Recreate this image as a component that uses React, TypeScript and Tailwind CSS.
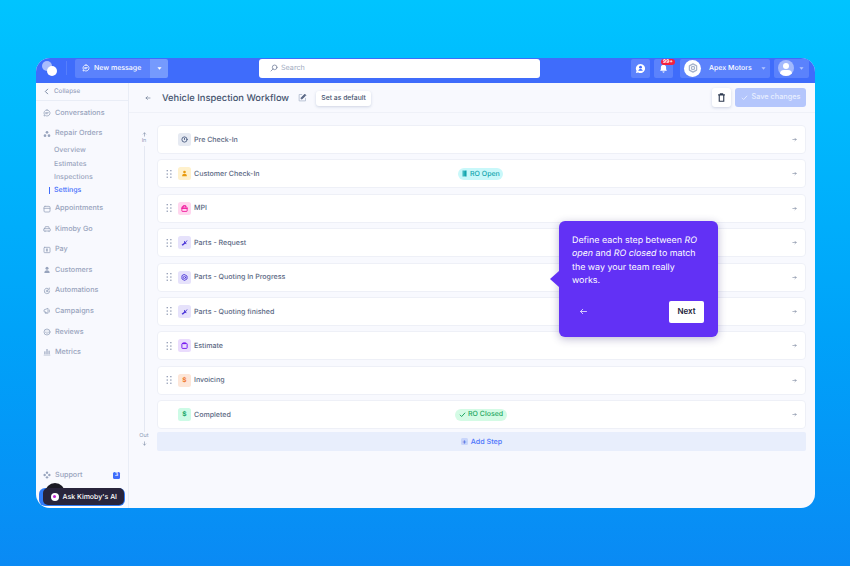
import React from "react";

type P = { className?: string };
const S = ({ className, children, fill }: P & { children: React.ReactNode; fill?: boolean }) => (
  <svg viewBox="0 0 24 24" className={className} fill={fill ? "currentColor" : "none"} stroke={fill ? "none" : "currentColor"} strokeWidth={2.4} strokeLinecap="round" strokeLinejoin="round">{children}</svg>
);
const Chat = (p: P) => <S {...p}><path d="M12 3a9 9 0 1 1-4.5 16.8L3 21l1.2-4.5A9 9 0 0 1 12 3z" /><path d="M8 11h8M8 14h5" /></S>;
const Orders = (p: P) => <S {...p} fill><circle cx="12" cy="7" r="4" /><circle cx="6" cy="17" r="4" /><circle cx="18" cy="17" r="4" /></S>;
const Calendar = (p: P) => <S {...p}><rect x="3" y="4" width="18" height="17" rx="3" /><path d="M3 10h18" /></S>;
const Car = (p: P) => <S {...p}><path d="M5 11l2-6h10l2 6" /><rect x="2" y="11" width="20" height="7" rx="2" /><path d="M6 18v2M18 18v2" /></S>;
const Pay = (p: P) => <S {...p}><rect x="3" y="4" width="18" height="16" rx="2" /><path d="M12 8v8M10 10h3M10 14h3" /></S>;
const Person = (p: P) => <S {...p} fill><circle cx="12" cy="7" r="4.5" /><path d="M4 21c0-5 3-8 8-8s8 3 8 8z" /></S>;
const Auto = (p: P) => <S {...p}><path d="M20 12a8 8 0 1 1-5-7.4" /><circle cx="12" cy="12" r="2.5" /><path d="M19 3v4h-4" /></S>;
const Mega = (p: P) => <S {...p}><path d="M3 10v4l12 5V5z" /><path d="M7 15v4h3M19 9v6" /></S>;
const Smile = (p: P) => <S {...p}><circle cx="12" cy="12" r="9" /><path d="M8 14c2 2 6 2 8 0M9 9h.01M15 9h.01" /></S>;
const Bars = (p: P) => <S {...p} fill><rect x="4" y="10" width="3.4" height="9" /><rect x="10.3" y="3" width="3.4" height="16" /><rect x="16.6" y="8" width="3.4" height="11" /><rect x="2" y="20.5" width="20" height="1.5" /></S>;
const Support = (p: P) => <S {...p} fill><circle cx="12" cy="5" r="3.6" /><circle cx="12" cy="19" r="3.6" /><circle cx="5" cy="12" r="3.6" /><circle cx="19" cy="12" r="3.6" /></S>;
const ArrowR = (p: P) => <S {...p}><path d="M4 12h16M14 6l6 6-6 6" /></S>;
const ArrowL = (p: P) => <S {...p}><path d="M20 12H4M10 6l-6 6 6 6" /></S>;
const ArrowU = (p: P) => <S {...p}><path d="M12 20V4M6 10l6-6 6 6" /></S>;
const ArrowD = (p: P) => <S {...p}><path d="M12 4v16M6 14l6 6 6-6" /></S>;
const Caret = (p: P) => <S {...p} fill><path d="M5 8h14l-7 8z" /></S>;
const Grip = () => (
  <svg viewBox="0 0 6 8" className="w-[6px] h-[8px] text-[#8f9ab3]" fill="currentColor">
    {[0.6, 4, 7.2].flatMap((y) => [0.6, 4.2].map((x) => <rect key={`${x}-${y}`} x={x} y={y - 0.6} width="1.3" height="1.3" />))}
  </svg>
);
const Clock = (p: P) => <S {...p}><circle cx="12" cy="12" r="9" strokeWidth={3} /><path d="M12 12V8" strokeWidth={3} /></S>;
const Bag = (p: P) => <S {...p}><rect x="3" y="7" width="18" height="15" rx="1.5" strokeWidth={3} /><path d="M8 7V2h8v5M3 12h18" strokeWidth={3} /></S>;
const Wrench = (p: P) => <S {...p} fill><path d="M2 20l9-7-1-5 3-1 1 4 8-8 0 2-6 9 3 1-1 3-4-2-8 7z" /></S>;
const Gear = (p: P) => <S {...p}><path d="M12 2l8.7 5v10L12 22l-8.7-5V7z" strokeWidth={3} /><circle cx="12" cy="12" r="3.8" strokeWidth={3} /></S>;
const Clip = (p: P) => <S {...p}><rect x="3" y="5" width="18" height="17" rx="2" strokeWidth={3.4} /><path d="M8 2h8v5H8z" fill="currentColor" strokeWidth={1} /></S>;
const Dollar = ({ className }: P) => <span className={`${className} flex items-center justify-center text-[6.5px] leading-none font-bold`}>$</span>;

const nav: [string, (p: P) => React.ReactElement][] = [
  ["Appointments", Calendar], ["Kimoby Go", Car], ["Pay", Pay], ["Customers", Person],
  ["Automations", Auto], ["Campaigns", Mega], ["Reviews", Smile], ["Metrics", Bars],
];

const steps = [
  { name: "Pre Check-In", Icon: Clock, bg: "bg-[#e6eaf2]", fg: "text-[#47597e]", grip: false },
  { name: "Customer Check-In", Icon: Person, bg: "bg-[#fff1cc]", fg: "text-[#e89a0c]", grip: true, badge: "open" },
  { name: "MPI", Icon: Bag, bg: "bg-[#ffd6ee]", fg: "text-[#f0149c]", grip: true },
  { name: "Parts - Request", Icon: Wrench, bg: "bg-[#e6e2fb]", fg: "text-[#4a35d8]", grip: true },
  { name: "Parts - Quoting In Progress", Icon: Gear, bg: "bg-[#e6e2fb]", fg: "text-[#4a35d8]", grip: true },
  { name: "Parts - Quoting finished", Icon: Wrench, bg: "bg-[#e6e2fb]", fg: "text-[#4a35d8]", grip: true },
  { name: "Estimate", Icon: Clip, bg: "bg-[#eadcfd]", fg: "text-[#7a1ff0]", grip: true },
  { name: "Invoicing", Icon: Dollar, bg: "bg-[#fde6d8]", fg: "text-[#f0782c]", grip: true },
  { name: "Completed", Icon: Dollar, bg: "bg-[#cdfbe6]", fg: "text-[#16a866]", grip: false, badge: "closed" },
];

export default function App() {
  return (
    <div className="w-[850px] h-[566px] overflow-hidden bg-gradient-to-b from-[#00c4ff] to-[#0a8af4] pt-[58px] pl-[36px] [text-rendering:geometricPrecision]" style={{ fontFamily: "Inter, 'Liberation Sans', sans-serif" }}>
      <div className="relative w-[779px] h-[450px] rounded-[14px] bg-[#f8f9fe] flex flex-col overflow-hidden">
        {/* top bar */}
        <header className="h-[25px] shrink-0 bg-[#3f6cfb] flex items-center pb-[5px] text-white">
          <div className="relative w-[18px] h-[18px] ml-[5px]">
            <div className="absolute left-[1px] top-[2px] w-[10px] h-[10px] rounded-full bg-[#a9bcfd]" />
            <div className="absolute left-[6px] top-[7px] w-[10px] h-[10px] rounded-full bg-white" />
          </div>
          <div className="w-px h-[14px] bg-[#567efb] ml-[7px]" />
          <div className="ml-[8px] h-[19px] w-[75px] rounded-l-[2px] bg-[#5b82fc] flex items-center pl-[7px] gap-[4px] text-[7px] font-medium">
            <Chat className="w-[8px] h-[8px]" /> New message
          </div>
          <div className="h-[19px] w-[18px] rounded-r-[2px] bg-[#759afd] flex items-center justify-center"><Caret className="w-[7px] h-[7px]" /></div>
          <div className="ml-[91px] h-[19px] w-[281px] rounded-[3px] bg-white flex items-center pl-[11px] gap-[3px] text-[7.2px] text-[#a1abc0]">
            <svg viewBox="0 0 24 24" className="w-[8px] h-[8px] text-[#76839e]" fill="none" stroke="currentColor" strokeWidth="2.4" strokeLinecap="round"><circle cx="14" cy="10" r="7" /><path d="M9 15l-6 6" /></svg>
            <span className="pt-[1px]">Search</span>
          </div>
          <div className="ml-[91px] w-[19px] h-[19px] rounded-[2px] bg-[#5b82fc] flex items-center justify-center">
            <svg viewBox="0 0 24 24" className="w-[11px] h-[11px]" fill="white"><path d="M12 2a10 10 0 1 1-5 18.7L2 22l1.3-5A10 10 0 0 1 12 2z" /><circle cx="12" cy="9" r="3" fill="#3f6cfb" /><path d="M7 17c1-3 3-4 5-4s4 1 5 4z" fill="#3f6cfb" /></svg>
          </div>
          <div className="relative ml-[4px] w-[19px] h-[19px] rounded-[2px] bg-[#5b82fc] flex items-center justify-center">
            <svg viewBox="0 0 24 24" className="w-[9px] h-[9px]" fill="white"><path d="M12 2c4 0 7 3 7 7v5l2 4H3l2-4V9c0-4 3-7 7-7z" /><path d="M9 20h6a3 3 0 0 1-6 0z" /></svg>
            <div className="absolute top-0 left-[7px] h-[6px] px-[2px] rounded-full bg-[#f5213f] text-[5px] leading-[6px] font-bold">99+</div>
          </div>
          <div className="ml-[7px] w-[90px] h-[19px] rounded-[2px] bg-[#5b82fc] flex items-center pl-[4px]">
            <div className="w-[17px] h-[17px] rounded-full bg-white flex items-center justify-center text-[#a7b4cc]">
              <Gear className="w-[10px] h-[10px]" />
            </div>
            <span className="ml-[8px] text-[7px] font-medium">Apex Motors</span>
            <Caret className="ml-auto mr-[3px] w-[7px] h-[7px] text-[#b5c6fd]" />
          </div>
          <div className="ml-[4px] w-[35px] h-[19px] rounded-[2px] bg-[#5b82fc] flex items-center pl-[4px]">
            <div className="relative w-[16px] h-[16px] rounded-full bg-[#a3b9fd] overflow-hidden">
              <div className="absolute left-[5px] top-[3px] w-[6px] h-[6px] rounded-full bg-white" />
              <div className="absolute left-[2px] top-[10px] w-[12px] h-[8px] rounded-full bg-white" />
            </div>
            <Caret className="ml-auto mr-[4px] w-[7px] h-[7px] text-[#b5c6fd]" />
          </div>
        </header>

        <div className="flex flex-1 min-h-0">
          {/* sidebar */}
          <aside className="w-[93px] shrink-0 border-r border-[#e9edf6] flex flex-col text-[7.2px] font-medium text-[#98a4bd]">
            <div className="h-[18px] shrink-0 border-b border-[#e9edf6] flex items-center pl-[7px] gap-[4px] text-[6.3px]">
              <svg viewBox="0 0 24 24" className="w-[7px] h-[7px] text-[#6b7a98]" fill="none" stroke="currentColor" strokeWidth="3" strokeLinecap="round" strokeLinejoin="round"><path d="M16 4l-8 8 8 8" /></svg>
              Collapse
            </div>
            <div className="pt-[2px] flex flex-col">
              <div className="h-[20.55px] flex items-center pl-[7px] gap-[4px]"><Chat className="w-[8px] h-[8px]" />Conversations</div>
              <div className="h-[20.55px] flex items-center pl-[7px] gap-[4px]"><Orders className="w-[8px] h-[8px]" />Repair Orders</div>
              {["Overview", "Estimates", "Inspections"].map((t) => (
                <div key={t} className="h-[13.2px] flex items-center pl-[18px] text-[7px]">{t}</div>
              ))}
              <div className="relative h-[13.2px] flex items-center pl-[18px] text-[7px] text-[#3f6cfb]">
                <div className="absolute left-[13px] top-[3px] w-px h-[7px] bg-[#3f6cfb]" />
                Settings
              </div>
              <div className="h-[1.5px]" />
              {nav.map(([t, I]) => (
                <div key={t} className="h-[20.55px] flex items-center pl-[7px] gap-[4px]"><I className="w-[8px] h-[8px]" />{t}</div>
              ))}
            </div>
            <div className="mt-auto mb-[26px] h-[14px] flex items-center pl-[7px] pr-[8px] gap-[4px]">
              <Support className="w-[8px] h-[8px]" />Support
              <span className="ml-auto w-[7px] h-[7px] rounded-[1.5px] bg-[#3f6cfb] text-white text-[5.5px] leading-[7px] text-center">3</span>
            </div>
          </aside>

          {/* main */}
          <main className="flex-1 min-w-0 flex flex-col">
            <div className="h-[30px] shrink-0 border-b border-[#eff1f8] flex items-center pl-[16px] pr-[9px]">
              <ArrowL className="w-[6px] h-[6px] text-[#5d6b88]" />
              <h1 className="ml-[11px] mt-[3px] text-[9.35px] font-medium text-[#46546f]">Vehicle Inspection Workflow</h1>
              <svg viewBox="0 0 24 24" className="ml-[9px] w-[9px] h-[9px] text-[#5d6b88]" fill="none" stroke="currentColor" strokeWidth="2.4"><path d="M20 13v8H3V4h8" stroke="#b6bfd1" /><path d="M8 16l1-4 9-9 3 3-9 9z" fill="currentColor" /></svg>
              <button className="ml-[9px] mt-[2px] h-[15px] w-[55px] rounded-[3px] bg-white shadow-[0_1px_3px_rgba(60,80,130,0.22)] text-[6.8px] font-medium text-[#46546f]">Set as default</button>
              <button className="ml-auto w-[19px] h-[19px] rounded-[3px] bg-white shadow-[0_1px_3px_rgba(60,80,130,0.22)] flex items-center justify-center text-[#2e3a50]">
                <svg viewBox="0 0 24 24" className="w-[9px] h-[9px]" fill="none" stroke="currentColor" strokeWidth="3"><path d="M3 5h18M9 5V2h6v3M6 5v17h12V5" /></svg>
              </button>
              <button className="ml-[4px] w-[71px] h-[19px] rounded-[3px] bg-[#b4c6fc] text-[#e8eeff] text-[7.3px] font-medium flex items-center justify-center gap-[4px]">
                <svg viewBox="0 0 24 24" className="w-[7px] h-[7px]" fill="none" stroke="currentColor" strokeWidth="3"><path d="M3 13l6 6L21 6" /></svg>
                Save changes
              </button>
            </div>

            <div className="flex-1 min-h-0 flex pt-[12px] pr-[9px]">
              {/* rail */}
              <div className="w-[28px] shrink-0 pl-[2px] flex flex-col items-center text-[#8f9cb8] text-[5.5px] leading-[7px]">
                <div className="h-[20px] flex flex-col items-center justify-end gap-[1px]">
                  <ArrowU className="w-[5px] h-[5px] text-[#6b7a98]" />
                  In
                </div>
                <div className="mt-px w-px h-[286px] bg-[#e4e8f2]" />
                <div className="mt-[1px]">Out</div>
                <ArrowD className="w-[5px] h-[5px] mt-[1px] text-[#6b7a98]" />
              </div>
              {/* list */}
              <div className="flex-1 min-w-0 flex flex-col">
                <div className="flex flex-col gap-[5.4px] mb-[3px]">
                  {steps.map(({ name, Icon, bg, fg, grip, badge }) => (
                    <div key={name} className="h-[29px] shrink-0 rounded-[4px] bg-white border border-[#eef0f7] flex items-center pl-[8px] pr-[8px] text-[7.07px] font-medium text-[#5a6782]">
                      <div className="w-[6px] flex items-center">{grip && <Grip />}</div>
                      <div className={`ml-[6px] w-[13px] h-[13px] rounded-[2.5px] flex items-center justify-center ${bg} ${fg}`}><Icon className="w-[7px] h-[7px]" /></div>
                      <span className="ml-[3px] pt-[1px] w-[259px] shrink-0 whitespace-nowrap">{name}</span>
                      {badge === "open" && (
                        <span className="ml-[5px] h-[12px] px-[3px] rounded-full bg-[#c9f8fa] text-[#12a5ad] flex items-center gap-[2px] text-[7px]">
                          <svg viewBox="0 0 24 24" className="w-[7px] h-[7px]" fill="currentColor"><path d="M5 2h14v20H5z" opacity="0.75" /><path d="M12 4l6-2v20l-6-2z" /></svg>
                          RO Open
                        </span>
                      )}
                      {badge === "closed" && (
                        <span className="ml-[2px] h-[12px] px-[4px] rounded-full bg-[#d4fbe5] text-[#1fa862] flex items-center gap-[2px] text-[7px]">
                          <svg viewBox="0 0 24 24" className="w-[7px] h-[7px]" fill="none" stroke="currentColor" strokeWidth="3.4"><path d="M3 13l6 6L21 6" /></svg>
                          RO Closed
                        </span>
                      )}
                      <ArrowR className="ml-auto w-[5px] h-[5px] text-[#64728f]" />
                    </div>
                  ))}
                </div>
                <div className="h-[19px] rounded-[2px] bg-[#e8eefc] flex items-center justify-center gap-[3px] text-[7.2px] font-medium text-[#4d75fb]">
                  <span className="w-[7px] h-[7px] rounded-[1.5px] bg-[#c8d5fb] flex items-center justify-center text-[#3f5fd8] text-[7px] leading-none">+</span>
                  <span className="pt-[1px]">Add Step</span>
                </div>
              </div>
            </div>
          </main>
        </div>

        {/* AI pill */}
        <div className="absolute left-[3px] top-[429.5px] w-[86px] h-[18px] rounded-[6px] bg-[#2f7bf8] shadow-[0_1px_2px_#ffffff]" />
        <div className="absolute left-[9px] top-[424.5px] w-[20px] h-[20px] rounded-full bg-[#1a1a24]" />
        <div className="absolute left-[6.5px] top-[430px] h-[17px] w-[81px] rounded-[5px] bg-[#28243c] flex items-center pl-[8px] gap-[4px] text-[7px] font-medium text-white">
          <span className="w-[8px] h-[8px] rounded-full bg-white flex items-center justify-center"><span className="w-[3px] h-[3px] rounded-full bg-[#c026d3]" /></span>
          <span className="pt-[1px]">Ask Kimoby's AI</span>
        </div>

        {/* tooltip */}
        <div className="absolute left-[523px] top-[163px] w-[159px] h-[116px] rounded-[6px] bg-[#6231f5] shadow-[0_2px_8px_rgba(40,30,110,0.3)] text-white pl-[13px] pr-[14px] pt-[13px] text-[8.9px] leading-[13.4px]">
          <div className="absolute -left-[9px] top-[50px] w-0 h-0 border-y-[8px] border-y-transparent border-r-[9px] border-r-[#6231f5]" />
          <p>Define each step between <em>RO open</em> and <em>RO closed</em> to match the way your team really works.</p>
          <ArrowL className="absolute left-[20px] top-[86px] w-[9px] h-[9px] text-[#e0d8fd]" />
          <button className="absolute right-[14px] top-[80px] w-[35px] h-[22px] rounded-[2px] bg-white text-[#23233a] text-[8px] font-semibold">Next</button>
        </div>
      </div>
    </div>
  );
}
